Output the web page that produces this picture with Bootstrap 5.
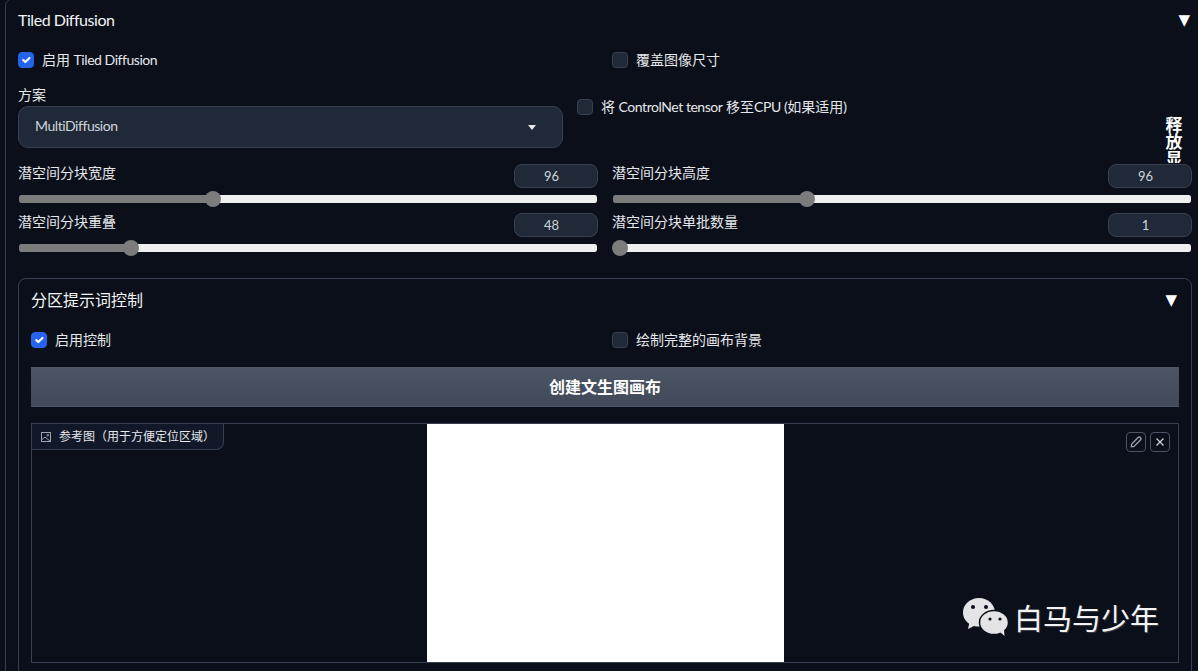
<!DOCTYPE html>
<html lang="zh-CN">
<head>
<meta charset="UTF-8" />
<meta name="viewport" content="width=device-width, initial-scale=1.0" />
<title>Tiled Diffusion</title>
<link href="https://cdn.jsdelivr.net/npm/bootstrap@5.3.0/dist/css/bootstrap.min.css" rel="stylesheet">
<style>
  html, body { height: 671px; overflow: hidden; }
  body { background: #0b0f19; color: #e5e7eb; font-family: Lato, "Noto Sans CJK SC", "Liberation Sans", sans-serif; font-size: 14px; }
  .latin-text { letter-spacing: -.45px; }

  .outer-panel { margin: -2px -10px 0 5px; padding: 9px 15px 0 12px; border: 1px solid #374151; border-radius: 8px; }
  .inner-panel { margin-top: 16px; padding: 9px 12px 0; border: 1px solid #374151; border-radius: 8px; width: 1174px; height: 420px; }
  .panel-title { height: 24px; line-height: 23px; font-size: 16px; color: #f3f4f6; }
  .panel-arrow { margin-right: 2px; font-family: "DejaVu Sans", sans-serif; font-size: 15px; color: #fff; line-height: 24px; }
  .title-gap { margin-bottom: 20px; }

  .two-cols { display: grid; grid-template-columns: 1fr 1fr; column-gap: 14px; }
  .check-item { height: 16px; line-height: 15px; color: #e5e7eb; gap: 8px; }
  .check-text { margin-bottom: 2px; }
  .check-item .form-check-input { width: 16px; height: 16px; margin: 0; flex: none; background-color: #1f2937; border: 1px solid #374151; border-radius: 4px; }
  .check-item .form-check-input:checked { background-color: #2563eb; border-color: #2563eb; }

  .scheme-row { margin-top: 17px; height: 79px; }
  .scheme-col { flex: 0 0 545px; margin-right: 14px; }
  .scheme-label { height: 21px; line-height: 19px; color: #e5e7eb; }
  .scheme-select.form-select { height: 42px; padding: 0 16px 4px; color: #d1d5db; font-size: 14px; letter-spacing: -.45px; background-color: #1f2937; border: 1px solid #374151; border-radius: 10px; background-image: url("data:image/svg+xml,%3Csvg xmlns='http://www.w3.org/2000/svg' viewBox='0 0 8 5'%3E%3Cpath fill='%23e5e7eb' d='M0 0h8L4 5z'/%3E%3C/svg%3E"); background-size: 8px 5px; background-position: right 26px center; }
  .cpu-check { margin-top: 14px; }
  .free-btn { width: 18px; margin: 31px 9px 0 auto; height: 47px; overflow: hidden; font-size: 17px; font-weight: 700; line-height: 17px; color: #fff; text-align: center; word-break: break-all; }

  .slider-box { height: 49px; }
  .slider-label { line-height: 17px; color: #e5e7eb; }
  .slider-num.form-control { width: 84px; height: 24px; min-height: 24px; padding: 0 0 0 6px; font-size: 13px; text-align: center; color: #d1d5db; background: #1f2937; border: 1px solid #374151; border-radius: 8px; }
  .slider-track { display: block; width: 100%; height: 15px; margin: 3px 0 0; padding: 0; appearance: none; -webkit-appearance: none; background: transparent; }
  .slider-track::-webkit-slider-runnable-track { height: 8px; border-left: 1px solid transparent; border-right: 1px solid transparent; border-radius: 3px; background: linear-gradient(to right, #7c7c7c var(--fill), #efefef var(--fill)) padding-box; }
  .slider-track::-webkit-slider-thumb { -webkit-appearance: none; width: 16px; height: 16px; margin: -4px 0 0 -1px; border-radius: 50%; background: #7c7c7c; }

  .canvas-btn.btn { display: block; width: 100%; height: 40px; margin-top: 19px; padding: 0; font-size: 16px; font-weight: 700; color: #fff; background: linear-gradient(to bottom, #4b5563, #414a58); border: 0; border-bottom: 1px solid #4b5563; border-radius: 0; }

  .ref-image { position: relative; height: 240px; margin-top: 16px; border: 1px solid #374151; }
  .ref-blank { width: 357px; height: 238px; background: #fff; }
  .ref-tab { position: absolute; left: 0; top: 0; height: 26px; width: 192px; padding-left: 9px; gap: 8px; font-size: 12px; color: #e5e7eb; background: #111827; border-right: 1px solid #374151; border-bottom: 1px solid #374151; border-bottom-right-radius: 8px; }
  .ref-tools { position: absolute; right: 8px; top: 8px; gap: 4px; }
  .tool-btn { width: 20px; height: 20px; color: #9ca3af; border: 1px solid #4b5563; border-radius: 4px; }

  .watermark { position: absolute; left: 929px; top: 172px; gap: 3px; }
  .watermark-text { font-family: "Noto Sans CJK SC", sans-serif; font-size: 29px; line-height: 42px; color: #f4f4f5; text-shadow: 1px 1px 1px #3f3f46; white-space: nowrap; }
</style>
</head>
<body>
  <div class="outer-panel">
    <div class="panel-title title-gap d-flex justify-content-between">
      <span class="latin-text">Tiled Diffusion</span>
      <span class="panel-arrow">▼</span>
    </div>

    <div class="two-cols">
      <label class="check-item d-flex align-items-center"><input class="form-check-input" type="checkbox" checked><span class="check-text">启用 <span class="latin-text">Tiled Diffusion</span></span></label>
      <label class="check-item d-flex align-items-center"><input class="form-check-input" type="checkbox"><span class="check-text">覆盖图像尺寸</span></label>
    </div>

    <div class="scheme-row d-flex">
      <div class="scheme-col">
        <div class="scheme-label">方案</div>
        <select class="scheme-select form-select"><option>MultiDiffusion</option></select>
      </div>
      <label class="check-item cpu-check d-flex align-items-center"><input class="form-check-input" type="checkbox"><span class="check-text">将 <span class="latin-text">ControlNet tensor</span> 移至<span class="latin-text">CPU (</span>如果适用<span class="latin-text">)</span></span></label>
      <div class="free-btn">释放显存</div>
    </div>

    <div class="two-cols">
      <div class="slider-box">
        <div class="d-flex justify-content-between"><span class="slider-label">潜空间分块宽度</span><input class="slider-num form-control" type="number" value="96"></div>
        <input class="slider-track" type="range" min="16" max="256" value="96" style="--fill: 33.3%">
      </div>
      <div class="slider-box">
        <div class="d-flex justify-content-between"><span class="slider-label">潜空间分块高度</span><input class="slider-num form-control" type="number" value="96"></div>
        <input class="slider-track" type="range" min="16" max="256" value="96" style="--fill: 33.3%">
      </div>
      <div class="slider-box">
        <div class="d-flex justify-content-between"><span class="slider-label">潜空间分块重叠</span><input class="slider-num form-control" type="number" value="48"></div>
        <input class="slider-track" type="range" min="0" max="256" value="48" style="--fill: 18.75%">
      </div>
      <div class="slider-box">
        <div class="d-flex justify-content-between"><span class="slider-label">潜空间分块单批数量</span><input class="slider-num form-control" type="number" value="1"></div>
        <input class="slider-track" type="range" min="1" max="8" value="1" style="--fill: 0%">
      </div>
    </div>

    <div class="inner-panel">
      <div class="panel-title title-gap d-flex justify-content-between">
        <span>分区提示词控制</span>
        <span class="panel-arrow">▼</span>
      </div>
      <div class="two-cols">
        <label class="check-item d-flex align-items-center"><input class="form-check-input" type="checkbox" checked><span class="check-text">启用控制</span></label>
        <label class="check-item d-flex align-items-center"><input class="form-check-input" type="checkbox"><span class="check-text">绘制完整的画布背景</span></label>
      </div>
      <button class="canvas-btn btn" type="button">创建文生图画布</button>

      <div class="ref-image d-flex justify-content-center">
        <div class="ref-blank"></div>
        <div class="ref-tab d-flex align-items-center">
          <svg width="10" height="10" viewBox="0 0 10 10" fill="none" stroke="#9ca3af" stroke-width="1"><rect x=".5" y=".5" width="9" height="9"/><path d="M.5 8 4 5l5.5 4.500"/><circle cx="6.800" cy="3.200" r=".8"/></svg>
          <span>参考图（用于方便定位区域）</span>
        </div>
        <div class="ref-tools d-flex">
          <div class="tool-btn d-flex align-items-center justify-content-center">
            <svg width="12" height="12" viewBox="0 0 12 12" fill="none" stroke="currentColor" stroke-width="1.300"><path d="M8.300 1.300a1.200 1.200 0 0 1 1.700 0l.7.7a1.200 1.200 0 0 1 0 1.700L4 10.400 1.300 10.800 1.700 8z"/></svg>
          </div>
          <div class="tool-btn d-flex align-items-center justify-content-center">
            <svg width="8" height="8" viewBox="0 0 8 8" fill="none" stroke="#d1d5db" stroke-width="1.200"><path d="M.5.5l7 7M7.500.5l-7 7"/></svg>
          </div>
        </div>
        <div class="watermark d-flex align-items-center">
          <svg width="50" height="42" viewBox="0 0 50 42">
            <path fill="#e4e4e7" d="M18 2c-9 0-16 6.500-16 14.500 0 4.700 2.400 8.700 6.200 11.300L7 33l6-3c1.600.4 3.200.6 5 .6 9 0 16-6.200 16-14.100S27 2 18 2z"/>
            <circle cx="12" cy="11" r="2" fill="#0b0f19"/><circle cx="25" cy="11" r="2" fill="#0b0f19"/>
            <ellipse cx="33" cy="26.500" rx="14.500" ry="12" fill="#e4e4e7" stroke="#0b0f19" stroke-width="1.500"/>
            <path fill="#e4e4e7" d="M39 36l4.500 4-.5-6.500z"/>
            <circle cx="29" cy="23" r="1.600" fill="#0b0f19"/><circle cx="39" cy="23" r="1.600" fill="#0b0f19"/>
          </svg>
          <span class="watermark-text">白马与少年</span>
        </div>
      </div>
    </div>
  </div>
  <script src="https://cdn.jsdelivr.net/npm/bootstrap@5.3.0/dist/js/bootstrap.bundle.min.js"></script>
</body>
</html>
